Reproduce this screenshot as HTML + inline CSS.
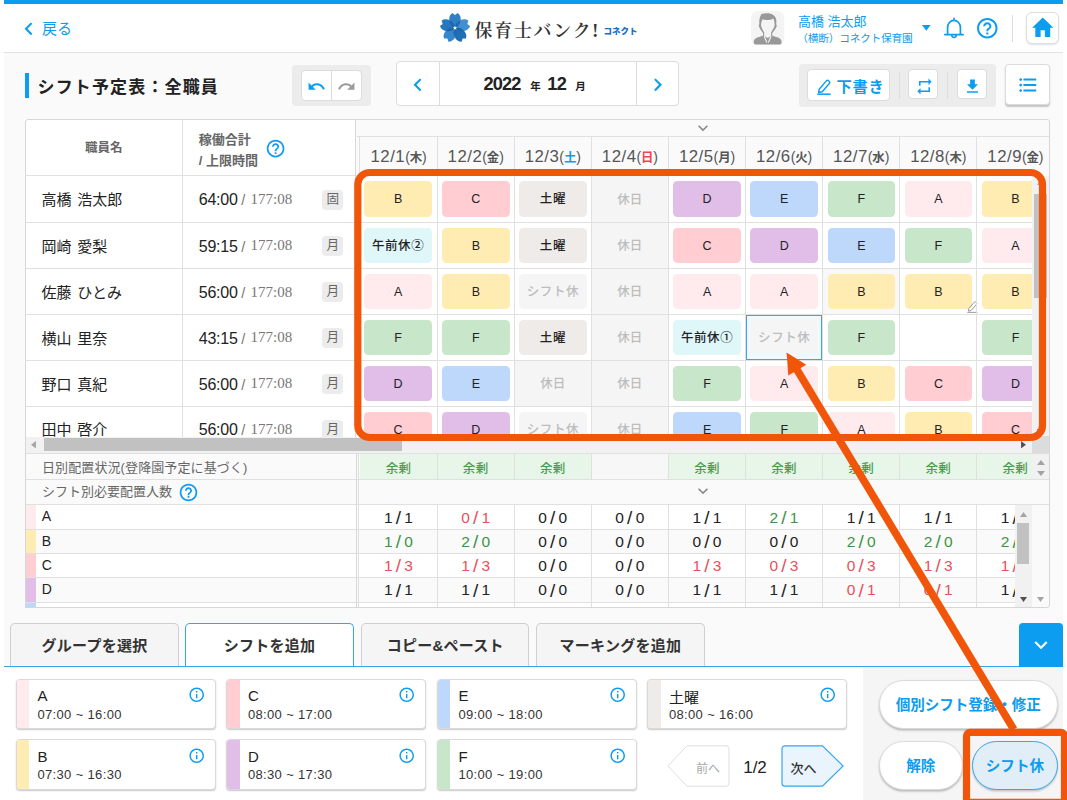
<!DOCTYPE html>
<html lang="ja"><head><meta charset="utf-8"><title>シフト予定表</title>
<style>
html,body{margin:0;padding:0;}
body{width:1067px;height:800px;overflow:hidden;position:relative;background:#fff;
font-family:"Liberation Sans","Noto Sans CJK JP",sans-serif;color:#222;}
body div,body svg{position:absolute;}
body div{box-sizing:border-box;}
span{position:static;}
</style></head><body>
<div style="left:4.00px;top:0.00px;width:1059.00px;height:800.00px;background:#fafafa;"></div>
<div style="left:4.00px;top:0.00px;width:1059.00px;height:3.90px;background:#0c9cf0;"></div>
<div style="left:4.00px;top:3.90px;width:1059.00px;height:48.90px;background:#fff;border-bottom:1px solid #e2e2e2;"></div>
<svg style="left:15.85px;top:15.65px;" width="25.50" height="25.50" viewBox="0 0 24 24"><path fill="#0c9cf0" d="M15.41 7.41L14 6l-6 6 6 6 1.41-1.41L10.83 12z"/></svg>
<div style="left:42.00px;top:17.80px;width:60.00px;height:21.00px;line-height:21.00px;color:#0c9cf0;font-size:15px;">戻る</div>
<svg style="left:438.00px;top:11.00px;" width="34.00" height="34.00" viewBox="0 0 100 100"><g transform="rotate(0 50 50)"><path fill="#2f7fc4" d="M50 50 C30 38 28 16 42 6 L50 12 L58 6 C72 16 70 38 50 50z"/></g><g transform="rotate(72 50 50)"><path fill="#3f8fd2" d="M50 50 C30 38 28 16 42 6 L50 12 L58 6 C72 16 70 38 50 50z"/></g><g transform="rotate(144 50 50)"><path fill="#1f6fb4" d="M50 50 C30 38 28 16 42 6 L50 12 L58 6 C72 16 70 38 50 50z"/></g><g transform="rotate(216 50 50)"><path fill="#3787cc" d="M50 50 C30 38 28 16 42 6 L50 12 L58 6 C72 16 70 38 50 50z"/></g><g transform="rotate(288 50 50)"><path fill="#2777bc" d="M50 50 C30 38 28 16 42 6 L50 12 L58 6 C72 16 70 38 50 50z"/></g><g transform="rotate(36 50 50)"><path fill="#1d62ad" opacity="0.85" d="M50 50 C44 42 44 30 50 24 C56 30 56 42 50 50z"/></g><g transform="rotate(108 50 50)"><path fill="#1d62ad" opacity="0.85" d="M50 50 C44 42 44 30 50 24 C56 30 56 42 50 50z"/></g><g transform="rotate(180 50 50)"><path fill="#1d62ad" opacity="0.85" d="M50 50 C44 42 44 30 50 24 C56 30 56 42 50 50z"/></g><g transform="rotate(252 50 50)"><path fill="#1d62ad" opacity="0.85" d="M50 50 C44 42 44 30 50 24 C56 30 56 42 50 50z"/></g><g transform="rotate(324 50 50)"><path fill="#1d62ad" opacity="0.85" d="M50 50 C44 42 44 30 50 24 C56 30 56 42 50 50z"/></g><path fill="#fff" d="M50 43.5l1.9 4 4.3.5-3.2 3 .9 4.3-3.9-2.2-3.9 2.2.9-4.3-3.2-3 4.3-.5z"/></svg>
<div style="left:474.50px;top:17.40px;width:130.00px;height:28.00px;line-height:28.00px;font-family:'Liberation Serif','Noto Serif CJK SC',serif;font-size:18px;font-weight:600;letter-spacing:1.7px;color:#333;white-space:nowrap;">保育士バンク!</div>
<div style="left:603.50px;top:24.40px;width:40.00px;height:14.00px;line-height:14.00px;font-size:8.5px;font-weight:900;color:#1b6fc2;white-space:nowrap;">コネクト</div>
<svg style="left:751.40px;top:11.20px;" width="33.30" height="34.20" viewBox="0 0 33.3 34.2"><rect x="0" y="0" width="33.3" height="34.2" rx="7" fill="#f4f4f4"/><path fill="#999" d="M8.1 15.8C7.6 14.6 7.7 13.6 8.4 13.2C8 9.5 8.5 5.5 10.6 2.9C13.5 2.2 17 2.1 19.6 2.7C22.5 3.3 24.7 5.6 25.2 8.2C25.5 10 25.4 11.8 25.1 13.2C25.9 13.6 25.9 14.8 25.4 15.9C24.6 18 22.6 20.4 21.2 22.2V24.6C23.5 25.6 27 26.3 28.8 27.6C30.3 28.8 30.9 30.6 30.4 32.2C30.1 33.1 29.4 33.6 28.4 33.6H4.9C3.9 33.6 3.2 33.1 2.9 32.2C2.4 30.6 3 28.8 4.5 27.6C6.3 26.3 9.8 25.6 12.1 24.6V22.2C10.7 20.4 8.9 18 8.1 15.8Z"/><path fill="#f4f4f4" d="M10 14.6C10 12.4 10.6 10.2 11.6 8.2C14 9.2 19.4 9.3 22.4 7.4C23.4 9.6 23.7 12.4 23.6 14.8C22.8 17.2 21.2 19.6 20.1 21.4V24.9L16.7 26.9L13.2 24.9V21.4C12 19.6 10.6 17.2 10 14.600000000000001Z"/><path fill="none" stroke="#f4f4f4" stroke-width="1.1" d="M13.2 25.2L15.9 31.6M20.1 25.2L17.4 31.6"/></svg>
<div style="left:798.00px;top:12.50px;width:120.00px;height:18.00px;line-height:18.00px;color:#0c9cf0;font-size:13px;white-space:nowrap;">高橋 浩太郎</div>
<div style="left:797.20px;top:30.00px;width:130.00px;height:16.00px;line-height:16.00px;color:#0c9cf0;font-size:10.7px;white-space:nowrap;letter-spacing:-0.2px;">（横断）コネクト保育園</div>
<svg style="left:922.30px;top:24.90px;" width="8.60" height="5.80" viewBox="0 0 8.6 5.8"><path fill="#0c9cf0" d="M0 0h8.6L4.3 5.8z"/></svg>
<svg style="left:941.60px;top:15.60px;" width="24.00" height="24.00" viewBox="0 0 24 24"><path fill="none" stroke="#0c9cf0" stroke-width="1.7" stroke-linejoin="round" stroke-linecap="round" d="M12 3.3v-1M5.6 18.5V11.5C5.6 7.6 8.300000000000001 4.4 12 4.4s6.4 3.2 6.4 7.1v7M2.8 18.6h18.4M9.700000000000001 19.2c.2 1.5 1.1 2.3 2.3 2.3s2.1-.8 2.3-2.3"/></svg>
<svg style="left:974.90px;top:16.30px;" width="24.60" height="24.60" viewBox="0 0 24 24"><path fill="#0c9cf0" d="M11 18h2v-2h-2v2zm1-16C6.48 2 2 6.48 2 12s4.48 10 10 10 10-4.48 10-10S17.52 2 12 2zm0 18c-4.41 0-8-3.59-8-8s3.59-8 8-8 8 3.59 8 8-3.59 8-8 8zm0-14c-2.21 0-4 1.79-4 4h2c0-1.1.9-2 2-2s2 .9 2 2c0 2-3 1.75-3 5h2c0-2.25 3-2.5 3-5 0-2.21-1.79-4-4-4z"/></svg>
<div style="left:1012.00px;top:15.00px;width:1.00px;height:26.50px;background:#ddd;"></div>
<div style="left:1026.00px;top:11.70px;width:33.00px;height:32.40px;background:#fff;border:1px solid #dedede;border-radius:6px;box-shadow:0 1px 2px rgba(0,0,0,.12);"></div>
<svg style="left:1029.65px;top:14.2px;" width="25.5" height="27.7" viewBox="0 0 24 24" preserveAspectRatio="none"><path fill="#0c9cf0" d="M10 20v-6h4v6h5v-8h3L12 3 2 12h3v8z"/></svg>
<div style="left:25.00px;top:73.00px;width:4.20px;height:24.50px;background:#0c9cf0;"></div>
<div style="left:37.50px;top:75.00px;width:200.00px;height:26.00px;line-height:26.00px;font-size:17px;font-weight:700;color:#222;letter-spacing:1.15px;white-space:nowrap;">シフト予定表：全職員</div>
<div style="left:292.20px;top:64.50px;width:78.80px;height:41.70px;background:#ececec;border-radius:4px;"></div>
<div style="left:301.00px;top:70.10px;width:61.40px;height:30.50px;background:#fff;border:1px solid #dcdcdc;border-radius:4px;"></div>
<div style="left:331.00px;top:70.30px;width:1.00px;height:30.00px;background:#dcdcdc;"></div>
<svg style="left:306.70px;top:76.50px;" width="19.00" height="19.00" viewBox="0 0 24 24"><path fill="#0c9cf0" d="M12.5 8c-2.65 0-5.05.99-6.9 2.6L2 7v9h9l-3.62-3.62c1.39-1.16 3.16-1.88 5.12-1.88 3.54 0 6.55 2.31 7.6 5.5l2.37-.78C21.08 11.03 17.15 8 12.5 8z"/></svg>
<svg style="left:337.30px;top:76.50px;" width="19.00" height="19.00" viewBox="0 0 24 24"><path fill="#9a9a9a" d="M18.4 10.6C16.55 8.99 14.15 8 11.5 8c-4.65 0-8.58 3.03-9.96 7.22L3.9 16c1.05-3.19 4.05-5.5 7.6-5.5 1.95 0 3.73.72 5.12 1.88L13 16h9V7l-3.6 3.6z"/></svg>
<div style="left:396.00px;top:61.30px;width:283.00px;height:44.60px;background:#fff;border:1px solid #dcdcdc;border-radius:4px;"></div>
<div style="left:439.00px;top:61.60px;width:1.00px;height:44.20px;background:#dcdcdc;"></div>
<div style="left:636.00px;top:61.60px;width:1.00px;height:44.20px;background:#dcdcdc;"></div>
<svg style="left:405.25px;top:71.55px;" width="25.50" height="25.50" viewBox="0 0 24 24"><path fill="#0c9cf0" d="M15.41 7.41L14 6l-6 6 6 6 1.41-1.41L10.83 12z"/></svg>
<svg style="left:645.25px;top:71.55px;" width="25.50" height="25.50" viewBox="0 0 24 24"><path fill="#0c9cf0" d="M10 6L8.59 7.41 13.17 12l-4.58 4.59L10 18l6-6z"/></svg>
<div style="left:483.6px;top:70px;width:150px;height:28px;line-height:28px;text-align:left;font-weight:700;color:#222;white-space:nowrap;"><span style="font-size:18.2px;letter-spacing:-0.9px;">2022</span><span style="font-size:10.5px;margin:0 6.3px 0 9.9px;">年</span><span style="font-size:18.2px;letter-spacing:-0.45px;">12</span><span style="font-size:10.5px;margin-left:8.8px;">月</span></div>
<div style="left:798.70px;top:64.00px;width:197.30px;height:42.80px;background:#ececec;border-radius:4px;"></div>
<div style="left:807.40px;top:69.30px;width:82.20px;height:32.20px;background:#fff;border:1px solid #dcdcdc;border-radius:4px;"></div>
<svg style="left:815.50px;top:78.20px;" width="16.00" height="17.00" viewBox="0 0 16 17"><path fill="none" stroke="#0c9cf0" stroke-width="1.4" stroke-linejoin="round" d="M3.2 11.2L10.6 2.6c.5-.5 1.200000000000001-.5 1.7 0l1.1 1c.5.5.5 1.2.1 1.7L6.2 13.8l-3.600000000000001.7z"/><path fill="none" stroke="#0c9cf0" stroke-width="1.5" d="M1.2 16.2h13.4"/></svg>
<div style="left:836.60px;top:75.50px;width:50.00px;height:22.00px;line-height:22.00px;font-size:15.3px;font-weight:700;color:#0c9cf0;letter-spacing:0.7px;white-space:nowrap;">下書き</div>
<div style="left:898.50px;top:72.00px;width:1.00px;height:27.00px;background:#dcdcdc;"></div>
<div style="left:908.40px;top:69.30px;width:30.00px;height:30.20px;background:#fff;border:1px solid #dcdcdc;border-radius:4px;"></div>
<svg style="left:914.50px;top:77.20px;" width="19.00" height="19.00" viewBox="0 0 24 24"><path fill="#0c9cf0" d="M7 7h10v3l4-4-4-4v3H5v6h2V7zm10 10H7v-3l-4 4 4 4v-3h12v-6h-2v4z"/></svg>
<div style="left:947.30px;top:72.00px;width:1.00px;height:27.00px;background:#dcdcdc;"></div>
<div style="left:957.30px;top:69.30px;width:30.00px;height:30.20px;background:#fff;border:1px solid #dcdcdc;border-radius:4px;"></div>
<svg style="left:963.20px;top:77.00px;" width="19.00" height="19.00" viewBox="0 0 24 24"><path fill="#0c9cf0" d="M19 9h-4V3H9v6H5l7 7 7-7zM5 18v2h14v-2H5z"/></svg>
<div style="left:1005.00px;top:63.70px;width:44.80px;height:41.50px;background:#fff;border:1px solid #dcdcdc;border-radius:4px;box-shadow:0 1.5px 1.5px rgba(0,0,0,.22);"></div>
<svg style="left:1016.80px;top:73.70px;" width="22.00" height="22.00" viewBox="0 0 24 24"><path fill="#0c9cf0" d="M4 10.5c-.83 0-1.5.67-1.5 1.5s.67 1.5 1.5 1.5 1.5-.67 1.5-1.5-.67-1.5-1.5-1.5zm0-6c-.83 0-1.5.67-1.5 1.5S3.17 7.5 4 7.5 5.5 6.83 5.5 6 4.83 4.5 4 4.5zm0 12c-.83 0-1.5.68-1.5 1.5s.68 1.5 1.5 1.5 1.5-.68 1.5-1.5-.67-1.5-1.5-1.5zM7 19h14v-2H7v2zm0-6h14v-2H7v2zm0-8v2h14V5H7z"/></svg>
<div style="left:25.20px;top:119.00px;width:1024.60px;height:317.80px;background:#fff;"></div>
<div style="left:356.20px;top:119.00px;width:693.60px;height:56.50px;background:#fafafa;"></div>
<div style="left:591.30px;top:175.50px;width:77.10px;height:261.30px;background:#f5f5f5;"></div>
<div style="left:514.20px;top:360.20px;width:77.10px;height:45.90px;background:#f5f5f5;"></div>
<div style="left:822.60px;top:268.40px;width:77.10px;height:45.90px;background:#f8f8f8;"></div>
<div style="left:25.20px;top:137.50px;width:157.00px;height:20.00px;line-height:20.00px;text-align:center;font-size:12.5px;font-weight:700;color:#666;">職員名</div>
<div style="left:198.80px;top:129.30px;width:80.00px;height:21.00px;line-height:21.00px;font-size:13px;font-weight:700;color:#666;white-space:nowrap;">稼働合計</div>
<div style="left:198.80px;top:150.30px;width:80.00px;height:21.00px;line-height:21.00px;font-size:13px;font-weight:700;color:#666;white-space:nowrap;">/ 上限時間</div>
<svg style="left:264.90px;top:137.70px;" width="21.20" height="21.20" viewBox="0 0 24 24"><path fill="#0c9cf0" d="M11 18h2v-2h-2v2zm1-16C6.48 2 2 6.48 2 12s4.48 10 10 10 10-4.48 10-10S17.52 2 12 2zm0 18c-4.41 0-8-3.59-8-8s3.59-8 8-8 8 3.59 8 8-3.59 8-8 8zm0-14c-2.21 0-4 1.79-4 4h2c0-1.1.9-2 2-2s2 .9 2 2c0 2-3 1.75-3 5h2c0-2.25 3-2.5 3-5 0-2.21-1.79-4-4-4z"/></svg>
<div style="left:360.00px;top:145.2px;width:77.1px;height:24px;line-height:24px;text-align:center;color:#555;white-space:nowrap;letter-spacing:-0.1px;"><span style="font-size:16.8px;letter-spacing:0.5px;">12/1</span><span style="font-size:14px;">(</span><span style="font-size:12.4px;font-weight:700;color:#555;position:relative;top:-0.6px;">木</span><span style="font-size:14px;">)</span></div>
<div style="left:437.10px;top:145.2px;width:77.1px;height:24px;line-height:24px;text-align:center;color:#555;white-space:nowrap;letter-spacing:-0.1px;"><span style="font-size:16.8px;letter-spacing:0.5px;">12/2</span><span style="font-size:14px;">(</span><span style="font-size:12.4px;font-weight:700;color:#555;position:relative;top:-0.6px;">金</span><span style="font-size:14px;">)</span></div>
<div style="left:514.20px;top:145.2px;width:77.1px;height:24px;line-height:24px;text-align:center;color:#555;white-space:nowrap;letter-spacing:-0.1px;"><span style="font-size:16.8px;letter-spacing:0.5px;">12/3</span><span style="font-size:14px;">(</span><span style="font-size:12.4px;font-weight:700;color:#0c9cf0;position:relative;top:-0.6px;">土</span><span style="font-size:14px;">)</span></div>
<div style="left:591.30px;top:145.2px;width:77.1px;height:24px;line-height:24px;text-align:center;color:#555;white-space:nowrap;letter-spacing:-0.1px;"><span style="font-size:16.8px;letter-spacing:0.5px;">12/4</span><span style="font-size:14px;">(</span><span style="font-size:12.4px;font-weight:700;color:#f0454f;position:relative;top:-0.6px;">日</span><span style="font-size:14px;">)</span></div>
<div style="left:668.40px;top:145.2px;width:77.1px;height:24px;line-height:24px;text-align:center;color:#555;white-space:nowrap;letter-spacing:-0.1px;"><span style="font-size:16.8px;letter-spacing:0.5px;">12/5</span><span style="font-size:14px;">(</span><span style="font-size:12.4px;font-weight:700;color:#555;position:relative;top:-0.6px;">月</span><span style="font-size:14px;">)</span></div>
<div style="left:745.50px;top:145.2px;width:77.1px;height:24px;line-height:24px;text-align:center;color:#555;white-space:nowrap;letter-spacing:-0.1px;"><span style="font-size:16.8px;letter-spacing:0.5px;">12/6</span><span style="font-size:14px;">(</span><span style="font-size:12.4px;font-weight:700;color:#555;position:relative;top:-0.6px;">火</span><span style="font-size:14px;">)</span></div>
<div style="left:822.60px;top:145.2px;width:77.1px;height:24px;line-height:24px;text-align:center;color:#555;white-space:nowrap;letter-spacing:-0.1px;"><span style="font-size:16.8px;letter-spacing:0.5px;">12/7</span><span style="font-size:14px;">(</span><span style="font-size:12.4px;font-weight:700;color:#555;position:relative;top:-0.6px;">水</span><span style="font-size:14px;">)</span></div>
<div style="left:899.70px;top:145.2px;width:77.1px;height:24px;line-height:24px;text-align:center;color:#555;white-space:nowrap;letter-spacing:-0.1px;"><span style="font-size:16.8px;letter-spacing:0.5px;">12/8</span><span style="font-size:14px;">(</span><span style="font-size:12.4px;font-weight:700;color:#555;position:relative;top:-0.6px;">木</span><span style="font-size:14px;">)</span></div>
<div style="left:976.80px;top:145.2px;width:77.1px;height:24px;line-height:24px;text-align:center;color:#555;white-space:nowrap;letter-spacing:-0.1px;"><span style="font-size:16.8px;letter-spacing:0.5px;">12/9</span><span style="font-size:14px;">(</span><span style="font-size:12.4px;font-weight:700;color:#555;position:relative;top:-0.6px;">金</span><span style="font-size:14px;">)</span></div>
<svg style="left:692.50px;top:117.60px;" width="20.00" height="20.00" viewBox="0 0 24 24"><path fill="#888" d="M16.59 8.59L12 13.17 7.41 8.59 6 10l6 6 6-6z"/></svg>
<div style="left:25.2px;top:175.5px;width:1006.8px;height:261.3px;overflow:hidden;">
<div style="left:16.40px;top:12.70px;width:130.00px;height:24.00px;line-height:24px;font-size:15px;color:#222;white-space:nowrap;word-spacing:1.6px;">高橋 浩太郎</div>
<div style="left:173.60px;top:12.70px;width:130px;height:24px;line-height:24px;white-space:nowrap;color:#222;"><span style="font-size:16px;letter-spacing:-0.25px;">64:00</span><span style="font-size:14.5px;color:#777;margin-left:3.6px;">/</span><span style="font-family:'Liberation Serif',serif;font-size:15px;color:#777;margin-left:5.4px;position:relative;top:-1.2px;">177:08</span></div>
<div style="left:297.00px;top:14.30px;width:21.20px;height:19.80px;line-height:19.8px;background:#ececec;border-radius:4px;text-align:center;font-size:12.6px;color:#666;">固</div>
<div style="left:338.60px;top:5.90px;width:68.60px;height:35.20px;line-height:37.8px;background:#ffecb3;border-radius:4.5px;text-align:center;font-size:12.5px;font-weight:500;color:#222;white-space:nowrap;">B</div>
<div style="left:416.90px;top:5.90px;width:67.50px;height:35.20px;line-height:37.8px;background:#ffcdd2;border-radius:4.5px;text-align:center;font-size:12.5px;font-weight:500;color:#222;white-space:nowrap;">C</div>
<div style="left:494.00px;top:5.90px;width:67.50px;height:35.20px;line-height:37.8px;background:#efebe9;border-radius:4.5px;text-align:center;font-size:12.5px;font-weight:500;color:#222;white-space:nowrap;letter-spacing:0.6px;">土曜</div>
<div style="left:566.10px;top:0.00px;width:77.10px;height:46.90px;line-height:48.3px;text-align:center;font-size:12.5px;color:#bdbdbd;font-weight:500;">休日</div>
<div style="left:648.20px;top:5.90px;width:67.50px;height:35.20px;line-height:37.8px;background:#e1bee7;border-radius:4.5px;text-align:center;font-size:12.5px;font-weight:500;color:#222;white-space:nowrap;">D</div>
<div style="left:725.30px;top:5.90px;width:67.50px;height:35.20px;line-height:37.8px;background:#bdd8fb;border-radius:4.5px;text-align:center;font-size:12.5px;font-weight:500;color:#222;white-space:nowrap;">E</div>
<div style="left:802.40px;top:5.90px;width:67.50px;height:35.20px;line-height:37.8px;background:#c8e6c9;border-radius:4.5px;text-align:center;font-size:12.5px;font-weight:500;color:#222;white-space:nowrap;">F</div>
<div style="left:879.50px;top:5.90px;width:67.50px;height:35.20px;line-height:37.8px;background:#ffebee;border-radius:4.5px;text-align:center;font-size:12.5px;font-weight:500;color:#222;white-space:nowrap;">A</div>
<div style="left:956.60px;top:5.90px;width:67.50px;height:35.20px;line-height:37.8px;background:#ffecb3;border-radius:4.5px;text-align:center;font-size:12.5px;font-weight:500;color:#222;white-space:nowrap;">B</div>
<div style="left:16.40px;top:59.15px;width:130.00px;height:24.00px;line-height:24px;font-size:15px;color:#222;white-space:nowrap;word-spacing:1.6px;">岡崎 愛梨</div>
<div style="left:173.60px;top:59.15px;width:130px;height:24px;line-height:24px;white-space:nowrap;color:#222;"><span style="font-size:16px;letter-spacing:-0.25px;">59:15</span><span style="font-size:14.5px;color:#777;margin-left:3.6px;">/</span><span style="font-family:'Liberation Serif',serif;font-size:15px;color:#777;margin-left:5.4px;position:relative;top:-1.2px;">177:08</span></div>
<div style="left:297.00px;top:60.75px;width:21.20px;height:19.80px;line-height:19.8px;background:#ececec;border-radius:4px;text-align:center;font-size:12.6px;color:#666;">月</div>
<div style="left:338.60px;top:52.50px;width:68.60px;height:35.20px;line-height:37.8px;background:#e0f7fa;border-radius:4.5px;text-align:center;font-size:12.5px;font-weight:500;color:#222;white-space:nowrap;letter-spacing:0.6px;">午前休②</div>
<div style="left:416.90px;top:52.50px;width:67.50px;height:35.20px;line-height:37.8px;background:#ffecb3;border-radius:4.5px;text-align:center;font-size:12.5px;font-weight:500;color:#222;white-space:nowrap;">B</div>
<div style="left:494.00px;top:52.50px;width:67.50px;height:35.20px;line-height:37.8px;background:#efebe9;border-radius:4.5px;text-align:center;font-size:12.5px;font-weight:500;color:#222;white-space:nowrap;letter-spacing:0.6px;">土曜</div>
<div style="left:566.10px;top:46.60px;width:77.10px;height:46.90px;line-height:48.3px;text-align:center;font-size:12.5px;color:#bdbdbd;font-weight:500;">休日</div>
<div style="left:648.20px;top:52.50px;width:67.50px;height:35.20px;line-height:37.8px;background:#ffcdd2;border-radius:4.5px;text-align:center;font-size:12.5px;font-weight:500;color:#222;white-space:nowrap;">C</div>
<div style="left:725.30px;top:52.50px;width:67.50px;height:35.20px;line-height:37.8px;background:#e1bee7;border-radius:4.5px;text-align:center;font-size:12.5px;font-weight:500;color:#222;white-space:nowrap;">D</div>
<div style="left:802.40px;top:52.50px;width:67.50px;height:35.20px;line-height:37.8px;background:#bdd8fb;border-radius:4.5px;text-align:center;font-size:12.5px;font-weight:500;color:#222;white-space:nowrap;">E</div>
<div style="left:879.50px;top:52.50px;width:67.50px;height:35.20px;line-height:37.8px;background:#c8e6c9;border-radius:4.5px;text-align:center;font-size:12.5px;font-weight:500;color:#222;white-space:nowrap;">F</div>
<div style="left:956.60px;top:52.50px;width:67.50px;height:35.20px;line-height:37.8px;background:#ffebee;border-radius:4.5px;text-align:center;font-size:12.5px;font-weight:500;color:#222;white-space:nowrap;">A</div>
<div style="left:16.40px;top:105.25px;width:130.00px;height:24.00px;line-height:24px;font-size:15px;color:#222;white-space:nowrap;word-spacing:1.6px;">佐藤 ひとみ</div>
<div style="left:173.60px;top:105.25px;width:130px;height:24px;line-height:24px;white-space:nowrap;color:#222;"><span style="font-size:16px;letter-spacing:-0.25px;">56:00</span><span style="font-size:14.5px;color:#777;margin-left:3.6px;">/</span><span style="font-family:'Liberation Serif',serif;font-size:15px;color:#777;margin-left:5.4px;position:relative;top:-1.2px;">177:08</span></div>
<div style="left:297.00px;top:106.85px;width:21.20px;height:19.80px;line-height:19.8px;background:#ececec;border-radius:4px;text-align:center;font-size:12.6px;color:#666;">月</div>
<div style="left:338.60px;top:98.80px;width:68.60px;height:35.20px;line-height:37.8px;background:#ffebee;border-radius:4.5px;text-align:center;font-size:12.5px;font-weight:500;color:#222;white-space:nowrap;">A</div>
<div style="left:416.90px;top:98.80px;width:67.50px;height:35.20px;line-height:37.8px;background:#ffecb3;border-radius:4.5px;text-align:center;font-size:12.5px;font-weight:500;color:#222;white-space:nowrap;">B</div>
<div style="left:494.00px;top:98.80px;width:67.50px;height:35.20px;line-height:37.8px;background:#f5f5f5;border-radius:4.5px;text-align:center;font-size:12.5px;font-weight:500;color:#bdbdbd;white-space:nowrap;letter-spacing:0.6px;">シフト休</div>
<div style="left:566.10px;top:92.90px;width:77.10px;height:46.90px;line-height:48.3px;text-align:center;font-size:12.5px;color:#bdbdbd;font-weight:500;">休日</div>
<div style="left:648.20px;top:98.80px;width:67.50px;height:35.20px;line-height:37.8px;background:#ffebee;border-radius:4.5px;text-align:center;font-size:12.5px;font-weight:500;color:#222;white-space:nowrap;">A</div>
<div style="left:725.30px;top:98.80px;width:67.50px;height:35.20px;line-height:37.8px;background:#ffebee;border-radius:4.5px;text-align:center;font-size:12.5px;font-weight:500;color:#222;white-space:nowrap;">A</div>
<div style="left:802.40px;top:98.80px;width:67.50px;height:35.20px;line-height:37.8px;background:#ffecb3;border-radius:4.5px;text-align:center;font-size:12.5px;font-weight:500;color:#222;white-space:nowrap;">B</div>
<div style="left:879.50px;top:98.80px;width:67.50px;height:35.20px;line-height:37.8px;background:#ffecb3;border-radius:4.5px;text-align:center;font-size:12.5px;font-weight:500;color:#222;white-space:nowrap;">B</div>
<div style="left:956.60px;top:98.80px;width:67.50px;height:35.20px;line-height:37.8px;background:#ffecb3;border-radius:4.5px;text-align:center;font-size:12.5px;font-weight:500;color:#222;white-space:nowrap;">B</div>
<div style="left:16.40px;top:151.15px;width:130.00px;height:24.00px;line-height:24px;font-size:15px;color:#222;white-space:nowrap;word-spacing:1.6px;">横山 里奈</div>
<div style="left:173.60px;top:151.15px;width:130px;height:24px;line-height:24px;white-space:nowrap;color:#222;"><span style="font-size:16px;letter-spacing:-0.25px;">43:15</span><span style="font-size:14.5px;color:#777;margin-left:3.6px;">/</span><span style="font-family:'Liberation Serif',serif;font-size:15px;color:#777;margin-left:5.4px;position:relative;top:-1.2px;">177:08</span></div>
<div style="left:297.00px;top:152.75px;width:21.20px;height:19.80px;line-height:19.8px;background:#ececec;border-radius:4px;text-align:center;font-size:12.6px;color:#666;">月</div>
<div style="left:338.60px;top:144.70px;width:68.60px;height:35.20px;line-height:37.8px;background:#c8e6c9;border-radius:4.5px;text-align:center;font-size:12.5px;font-weight:500;color:#222;white-space:nowrap;">F</div>
<div style="left:416.90px;top:144.70px;width:67.50px;height:35.20px;line-height:37.8px;background:#c8e6c9;border-radius:4.5px;text-align:center;font-size:12.5px;font-weight:500;color:#222;white-space:nowrap;">F</div>
<div style="left:494.00px;top:144.70px;width:67.50px;height:35.20px;line-height:37.8px;background:#efebe9;border-radius:4.5px;text-align:center;font-size:12.5px;font-weight:500;color:#222;white-space:nowrap;letter-spacing:0.6px;">土曜</div>
<div style="left:566.10px;top:138.80px;width:77.10px;height:46.90px;line-height:48.3px;text-align:center;font-size:12.5px;color:#bdbdbd;font-weight:500;">休日</div>
<div style="left:648.20px;top:144.70px;width:67.50px;height:35.20px;line-height:37.8px;background:#e0f7fa;border-radius:4.5px;text-align:center;font-size:12.5px;font-weight:500;color:#222;white-space:nowrap;letter-spacing:0.6px;">午前休①</div>
<div style="left:720.60px;top:139.20px;width:76.50px;height:45.30px;box-sizing:border-box;border:1.4px solid #35a6ee;background:#f1f8fe;"></div>
<div style="left:725.30px;top:144.70px;width:67.50px;height:35.20px;line-height:37.8px;background:#f5f5f5;border-radius:4.5px;text-align:center;font-size:12.5px;font-weight:500;color:#bdbdbd;white-space:nowrap;letter-spacing:0.6px;">シフト休</div>
<div style="left:802.40px;top:144.70px;width:67.50px;height:35.20px;line-height:37.8px;background:#c8e6c9;border-radius:4.5px;text-align:center;font-size:12.5px;font-weight:500;color:#222;white-space:nowrap;">F</div>
<div style="left:956.60px;top:144.70px;width:67.50px;height:35.20px;line-height:37.8px;background:#c8e6c9;border-radius:4.5px;text-align:center;font-size:12.5px;font-weight:500;color:#222;white-space:nowrap;">F</div>
<div style="left:16.40px;top:197.05px;width:130.00px;height:24.00px;line-height:24px;font-size:15px;color:#222;white-space:nowrap;word-spacing:1.6px;">野口 真紀</div>
<div style="left:173.60px;top:197.05px;width:130px;height:24px;line-height:24px;white-space:nowrap;color:#222;"><span style="font-size:16px;letter-spacing:-0.25px;">56:00</span><span style="font-size:14.5px;color:#777;margin-left:3.6px;">/</span><span style="font-family:'Liberation Serif',serif;font-size:15px;color:#777;margin-left:5.4px;position:relative;top:-1.2px;">177:08</span></div>
<div style="left:297.00px;top:198.65px;width:21.20px;height:19.80px;line-height:19.8px;background:#ececec;border-radius:4px;text-align:center;font-size:12.6px;color:#666;">月</div>
<div style="left:338.60px;top:190.60px;width:68.60px;height:35.20px;line-height:37.8px;background:#e1bee7;border-radius:4.5px;text-align:center;font-size:12.5px;font-weight:500;color:#222;white-space:nowrap;">D</div>
<div style="left:416.90px;top:190.60px;width:67.50px;height:35.20px;line-height:37.8px;background:#bdd8fb;border-radius:4.5px;text-align:center;font-size:12.5px;font-weight:500;color:#222;white-space:nowrap;">E</div>
<div style="left:489.00px;top:184.70px;width:77.10px;height:46.90px;line-height:48.3px;text-align:center;font-size:12.5px;color:#bdbdbd;font-weight:500;">休日</div>
<div style="left:566.10px;top:184.70px;width:77.10px;height:46.90px;line-height:48.3px;text-align:center;font-size:12.5px;color:#bdbdbd;font-weight:500;">休日</div>
<div style="left:648.20px;top:190.60px;width:67.50px;height:35.20px;line-height:37.8px;background:#c8e6c9;border-radius:4.5px;text-align:center;font-size:12.5px;font-weight:500;color:#222;white-space:nowrap;">F</div>
<div style="left:725.30px;top:190.60px;width:67.50px;height:35.20px;line-height:37.8px;background:#ffebee;border-radius:4.5px;text-align:center;font-size:12.5px;font-weight:500;color:#222;white-space:nowrap;">A</div>
<div style="left:802.40px;top:190.60px;width:67.50px;height:35.20px;line-height:37.8px;background:#ffecb3;border-radius:4.5px;text-align:center;font-size:12.5px;font-weight:500;color:#222;white-space:nowrap;">B</div>
<div style="left:879.50px;top:190.60px;width:67.50px;height:35.20px;line-height:37.8px;background:#ffcdd2;border-radius:4.5px;text-align:center;font-size:12.5px;font-weight:500;color:#222;white-space:nowrap;">C</div>
<div style="left:956.60px;top:190.60px;width:67.50px;height:35.20px;line-height:37.8px;background:#e1bee7;border-radius:4.5px;text-align:center;font-size:12.5px;font-weight:500;color:#222;white-space:nowrap;">D</div>
<div style="left:16.40px;top:242.95px;width:130.00px;height:24.00px;line-height:24px;font-size:15px;color:#222;white-space:nowrap;word-spacing:1.6px;">田中 啓介</div>
<div style="left:173.60px;top:242.95px;width:130px;height:24px;line-height:24px;white-space:nowrap;color:#222;"><span style="font-size:16px;letter-spacing:-0.25px;">56:00</span><span style="font-size:14.5px;color:#777;margin-left:3.6px;">/</span><span style="font-family:'Liberation Serif',serif;font-size:15px;color:#777;margin-left:5.4px;position:relative;top:-1.2px;">177:08</span></div>
<div style="left:297.00px;top:244.55px;width:21.20px;height:19.80px;line-height:19.8px;background:#ececec;border-radius:4px;text-align:center;font-size:12.6px;color:#666;">月</div>
<div style="left:338.60px;top:236.50px;width:68.60px;height:35.20px;line-height:37.8px;background:#ffcdd2;border-radius:4.5px;text-align:center;font-size:12.5px;font-weight:500;color:#222;white-space:nowrap;">C</div>
<div style="left:416.90px;top:236.50px;width:67.50px;height:35.20px;line-height:37.8px;background:#e1bee7;border-radius:4.5px;text-align:center;font-size:12.5px;font-weight:500;color:#222;white-space:nowrap;">D</div>
<div style="left:494.00px;top:236.50px;width:67.50px;height:35.20px;line-height:37.8px;background:#f5f5f5;border-radius:4.5px;text-align:center;font-size:12.5px;font-weight:500;color:#bdbdbd;white-space:nowrap;letter-spacing:0.6px;">シフト休</div>
<div style="left:566.10px;top:230.60px;width:77.10px;height:46.90px;line-height:48.3px;text-align:center;font-size:12.5px;color:#bdbdbd;font-weight:500;">休日</div>
<div style="left:648.20px;top:236.50px;width:67.50px;height:35.20px;line-height:37.8px;background:#bdd8fb;border-radius:4.5px;text-align:center;font-size:12.5px;font-weight:500;color:#222;white-space:nowrap;">E</div>
<div style="left:725.30px;top:236.50px;width:67.50px;height:35.20px;line-height:37.8px;background:#c8e6c9;border-radius:4.5px;text-align:center;font-size:12.5px;font-weight:500;color:#222;white-space:nowrap;">F</div>
<div style="left:802.40px;top:236.50px;width:67.50px;height:35.20px;line-height:37.8px;background:#ffebee;border-radius:4.5px;text-align:center;font-size:12.5px;font-weight:500;color:#222;white-space:nowrap;">A</div>
<div style="left:879.50px;top:236.50px;width:67.50px;height:35.20px;line-height:37.8px;background:#ffecb3;border-radius:4.5px;text-align:center;font-size:12.5px;font-weight:500;color:#222;white-space:nowrap;">B</div>
<div style="left:956.60px;top:236.50px;width:67.50px;height:35.20px;line-height:37.8px;background:#ffcdd2;border-radius:4.5px;text-align:center;font-size:12.5px;font-weight:500;color:#222;white-space:nowrap;">C</div>
<svg style="left:940.80px;top:124.50px;" width="13" height="13" viewBox="0 0 16 17"><path fill="none" stroke="#9a9a9a" stroke-width="1.3" stroke-linejoin="round" d="M3.2 11.2L10.6 2.6c.5-.5 1.2-.5 1.7 0l1.1 1c.5.5.5 1.2.1 1.7L6.2 13.8l-3.6.7z"/><path fill="none" stroke="#9a9a9a" stroke-width="1.3" d="M1.2 16.2h13.4"/></svg>
</div>
<div style="left:25.20px;top:175.00px;width:1006.80px;height:1.00px;background:#e0e0e0;"></div>
<div style="left:25.20px;top:221.60px;width:1006.80px;height:1.00px;background:#e0e0e0;"></div>
<div style="left:25.20px;top:267.90px;width:1006.80px;height:1.00px;background:#e0e0e0;"></div>
<div style="left:25.20px;top:313.80px;width:1006.80px;height:1.00px;background:#e0e0e0;"></div>
<div style="left:25.20px;top:359.70px;width:1006.80px;height:1.00px;background:#e0e0e0;"></div>
<div style="left:25.20px;top:405.60px;width:1006.80px;height:1.00px;background:#e0e0e0;"></div>
<div style="left:356.50px;top:136.10px;width:693.30px;height:1.00px;background:#e0e0e0;"></div>
<div style="left:436.60px;top:136.60px;width:1.00px;height:300.20px;background:#e0e0e0;"></div>
<div style="left:513.70px;top:136.60px;width:1.00px;height:300.20px;background:#e0e0e0;"></div>
<div style="left:590.80px;top:136.60px;width:1.00px;height:300.20px;background:#e0e0e0;"></div>
<div style="left:667.90px;top:136.60px;width:1.00px;height:300.20px;background:#e0e0e0;"></div>
<div style="left:745.00px;top:136.60px;width:1.00px;height:300.20px;background:#e0e0e0;"></div>
<div style="left:822.10px;top:136.60px;width:1.00px;height:300.20px;background:#e0e0e0;"></div>
<div style="left:899.20px;top:136.60px;width:1.00px;height:300.20px;background:#e0e0e0;"></div>
<div style="left:976.30px;top:136.60px;width:1.00px;height:300.20px;background:#e0e0e0;"></div>
<div style="left:182.00px;top:119.00px;width:1.00px;height:317.80px;background:#e0e0e0;"></div>
<div style="left:355.20px;top:119.00px;width:1.00px;height:317.80px;background:#d8d8d8;"></div>
<div style="left:359.20px;top:136.60px;width:1.00px;height:300.20px;background:#e0e0e0;"></div>
<div style="left:1032.00px;top:175.50px;width:17.80px;height:261.30px;background:#f1f1f1;"></div>
<div style="left:1034.30px;top:194.10px;width:13.00px;height:104.00px;background:#c1c1c1;"></div>
<div style="left:25.20px;top:436.80px;width:1024.60px;height:16.00px;background:#f1f1f1;"></div>
<div style="left:44.00px;top:438.20px;width:358.00px;height:13.00px;background:#c1c1c1;"></div>
<div style="left:1032.00px;top:435.80px;width:17.80px;height:17.00px;background:#dcdcdc;"></div>
<svg style="left:31.00px;top:441.00px;" width="5.00" height="7.40" viewBox="0 0 6 9"><path fill="#a3a3a3" d="M6 0v9L0 4.5z"/></svg>
<svg style="left:1021.20px;top:441.00px;" width="5.00" height="7.40" viewBox="0 0 6 9"><path fill="#505050" d="M0 0v9L6 4.5z"/></svg>
<svg style="left:1037.00px;top:429.00px;" width="7.00" height="5.00" viewBox="0 0 7 5"><path fill="#505050" d="M0 0h7L3.5 5z"/></svg>
<svg style="left:1037.00px;top:180.00px;" width="7.00" height="5.00" viewBox="0 0 7 5"><path fill="#a3a3a3" d="M0 5h7L3.5 0z"/></svg>
<div style="left:25.20px;top:452.80px;width:1024.60px;height:155.20px;background:#fafafa;"></div>
<div style="left:25.20px;top:504.60px;width:989.60px;height:25.20px;background:#fff;"></div>
<div style="left:25.20px;top:529.80px;width:989.60px;height:24.00px;background:#fafafa;"></div>
<div style="left:25.20px;top:553.80px;width:989.60px;height:24.10px;background:#fff;"></div>
<div style="left:25.20px;top:577.90px;width:989.60px;height:24.10px;background:#fafafa;"></div>
<div style="left:25.20px;top:602.00px;width:989.60px;height:6.00px;background:#fff;"></div>
<div style="left:360.00px;top:453.60px;width:77.10px;height:26.10px;background:#e8f5e9;overflow:hidden;"><div style="left:0;top:0;width:77.1px;height:26.10px;line-height:30.10px;text-align:center;font-size:12.5px;font-weight:500;color:#4c9a50;letter-spacing:0.3px;">余剰</div></div>
<div style="left:437.10px;top:453.60px;width:77.10px;height:26.10px;background:#e8f5e9;overflow:hidden;"><div style="left:0;top:0;width:77.1px;height:26.10px;line-height:30.10px;text-align:center;font-size:12.5px;font-weight:500;color:#4c9a50;letter-spacing:0.3px;">余剰</div></div>
<div style="left:514.20px;top:453.60px;width:77.10px;height:26.10px;background:#e8f5e9;overflow:hidden;"><div style="left:0;top:0;width:77.1px;height:26.10px;line-height:30.10px;text-align:center;font-size:12.5px;font-weight:500;color:#4c9a50;letter-spacing:0.3px;">余剰</div></div>
<div style="left:591.30px;top:453.60px;width:77.10px;height:26.10px;background:#f7f7f7;"></div>
<div style="left:668.40px;top:453.60px;width:77.10px;height:26.10px;background:#e8f5e9;overflow:hidden;"><div style="left:0;top:0;width:77.1px;height:26.10px;line-height:30.10px;text-align:center;font-size:12.5px;font-weight:500;color:#4c9a50;letter-spacing:0.3px;">余剰</div></div>
<div style="left:745.50px;top:453.60px;width:77.10px;height:26.10px;background:#e8f5e9;overflow:hidden;"><div style="left:0;top:0;width:77.1px;height:26.10px;line-height:30.10px;text-align:center;font-size:12.5px;font-weight:500;color:#4c9a50;letter-spacing:0.3px;">余剰</div></div>
<div style="left:822.60px;top:453.60px;width:77.10px;height:26.10px;background:#e8f5e9;overflow:hidden;"><div style="left:0;top:0;width:77.1px;height:26.10px;line-height:30.10px;text-align:center;font-size:12.5px;font-weight:500;color:#4c9a50;letter-spacing:0.3px;">余剰</div></div>
<div style="left:899.70px;top:453.60px;width:77.10px;height:26.10px;background:#e8f5e9;overflow:hidden;"><div style="left:0;top:0;width:77.1px;height:26.10px;line-height:30.10px;text-align:center;font-size:12.5px;font-weight:500;color:#4c9a50;letter-spacing:0.3px;">余剰</div></div>
<div style="left:976.80px;top:453.60px;width:55.20px;height:26.10px;background:#e8f5e9;overflow:hidden;"><div style="left:0;top:0;width:77.1px;height:26.10px;line-height:30.10px;text-align:center;font-size:12.5px;font-weight:500;color:#4c9a50;letter-spacing:0.3px;">余剰</div></div>
<div style="left:42.00px;top:454.60px;width:260.00px;height:26.10px;line-height:26.10px;font-size:13px;color:#666;white-space:nowrap;letter-spacing:0.1px;">日別配置状況(登降園予定に基づく)</div>
<div style="left:42.00px;top:479.50px;width:200.00px;height:24.90px;line-height:24.90px;font-size:13px;color:#666;white-space:nowrap;">シフト別必要配置人数</div>
<svg style="left:177.90px;top:482.00px;" width="21.00" height="21.00" viewBox="0 0 24 24"><path fill="#0c9cf0" d="M11 18h2v-2h-2v2zm1-16C6.48 2 2 6.48 2 12s4.48 10 10 10 10-4.48 10-10S17.52 2 12 2zm0 18c-4.41 0-8-3.59-8-8s3.59-8 8-8 8 3.59 8 8-3.59 8-8 8zm0-14c-2.21 0-4 1.79-4 4h2c0-1.1.9-2 2-2s2 .9 2 2c0 2-3 1.75-3 5h2c0-2.25 3-2.5 3-5 0-2.21-1.79-4-4-4z"/></svg>
<svg style="left:692.50px;top:480.60px;" width="20.00" height="20.00" viewBox="0 0 24 24"><path fill="#888" d="M16.59 8.59L12 13.17 7.41 8.59 6 10l6 6 6-6z"/></svg>
<div style="left:25.2px;top:504.6px;width:989.5999999999999px;height:103.39999999999998px;overflow:hidden;">
<div style="left:0;top:0.00px;width:10.5px;height:25.20px;background:#ffebee;"></div>
<div style="left:16.60px;top:-1.00px;width:40px;height:25.20px;line-height:25.20px;font-size:14px;color:#222;">A</div>
<div style="left:334.80px;top:-0.90px;width:77.1px;height:25.20px;line-height:25.20px;text-align:center;font-size:15.5px;color:#222;white-space:nowrap;">1<span style="font-size:19px;margin:0 3.3px 0 3.1px;position:relative;top:1.6px;">/</span>1</div>
<div style="left:411.90px;top:-0.90px;width:77.1px;height:25.20px;line-height:25.20px;text-align:center;font-size:15.5px;color:#ea4f5b;white-space:nowrap;">0<span style="font-size:19px;margin:0 3.3px 0 3.1px;position:relative;top:1.6px;">/</span>1</div>
<div style="left:489.00px;top:-0.90px;width:77.1px;height:25.20px;line-height:25.20px;text-align:center;font-size:15.5px;color:#222;white-space:nowrap;">0<span style="font-size:19px;margin:0 3.3px 0 3.1px;position:relative;top:1.6px;">/</span>0</div>
<div style="left:566.10px;top:-0.90px;width:77.1px;height:25.20px;line-height:25.20px;text-align:center;font-size:15.5px;color:#222;white-space:nowrap;">0<span style="font-size:19px;margin:0 3.3px 0 3.1px;position:relative;top:1.6px;">/</span>0</div>
<div style="left:643.20px;top:-0.90px;width:77.1px;height:25.20px;line-height:25.20px;text-align:center;font-size:15.5px;color:#222;white-space:nowrap;">1<span style="font-size:19px;margin:0 3.3px 0 3.1px;position:relative;top:1.6px;">/</span>1</div>
<div style="left:720.30px;top:-0.90px;width:77.1px;height:25.20px;line-height:25.20px;text-align:center;font-size:15.5px;color:#3c9445;white-space:nowrap;">2<span style="font-size:19px;margin:0 3.3px 0 3.1px;position:relative;top:1.6px;">/</span>1</div>
<div style="left:797.40px;top:-0.90px;width:77.1px;height:25.20px;line-height:25.20px;text-align:center;font-size:15.5px;color:#222;white-space:nowrap;">1<span style="font-size:19px;margin:0 3.3px 0 3.1px;position:relative;top:1.6px;">/</span>1</div>
<div style="left:874.50px;top:-0.90px;width:77.1px;height:25.20px;line-height:25.20px;text-align:center;font-size:15.5px;color:#222;white-space:nowrap;">1<span style="font-size:19px;margin:0 3.3px 0 3.1px;position:relative;top:1.6px;">/</span>1</div>
<div style="left:951.60px;top:-0.90px;width:77.1px;height:25.20px;line-height:25.20px;text-align:center;font-size:15.5px;color:#222;white-space:nowrap;">1<span style="font-size:19px;margin:0 3.3px 0 3.1px;position:relative;top:1.6px;">/</span>1</div>
<div style="left:0;top:25.20px;width:10.5px;height:24.00px;background:#ffecb3;"></div>
<div style="left:16.60px;top:24.20px;width:40px;height:24.00px;line-height:24.00px;font-size:14px;color:#222;">B</div>
<div style="left:334.80px;top:24.30px;width:77.1px;height:24.00px;line-height:24.00px;text-align:center;font-size:15.5px;color:#3c9445;white-space:nowrap;">1<span style="font-size:19px;margin:0 3.3px 0 3.1px;position:relative;top:1.6px;">/</span>0</div>
<div style="left:411.90px;top:24.30px;width:77.1px;height:24.00px;line-height:24.00px;text-align:center;font-size:15.5px;color:#3c9445;white-space:nowrap;">2<span style="font-size:19px;margin:0 3.3px 0 3.1px;position:relative;top:1.6px;">/</span>0</div>
<div style="left:489.00px;top:24.30px;width:77.1px;height:24.00px;line-height:24.00px;text-align:center;font-size:15.5px;color:#222;white-space:nowrap;">0<span style="font-size:19px;margin:0 3.3px 0 3.1px;position:relative;top:1.6px;">/</span>0</div>
<div style="left:566.10px;top:24.30px;width:77.1px;height:24.00px;line-height:24.00px;text-align:center;font-size:15.5px;color:#222;white-space:nowrap;">0<span style="font-size:19px;margin:0 3.3px 0 3.1px;position:relative;top:1.6px;">/</span>0</div>
<div style="left:643.20px;top:24.30px;width:77.1px;height:24.00px;line-height:24.00px;text-align:center;font-size:15.5px;color:#222;white-space:nowrap;">0<span style="font-size:19px;margin:0 3.3px 0 3.1px;position:relative;top:1.6px;">/</span>0</div>
<div style="left:720.30px;top:24.30px;width:77.1px;height:24.00px;line-height:24.00px;text-align:center;font-size:15.5px;color:#222;white-space:nowrap;">0<span style="font-size:19px;margin:0 3.3px 0 3.1px;position:relative;top:1.6px;">/</span>0</div>
<div style="left:797.40px;top:24.30px;width:77.1px;height:24.00px;line-height:24.00px;text-align:center;font-size:15.5px;color:#3c9445;white-space:nowrap;">2<span style="font-size:19px;margin:0 3.3px 0 3.1px;position:relative;top:1.6px;">/</span>0</div>
<div style="left:874.50px;top:24.30px;width:77.1px;height:24.00px;line-height:24.00px;text-align:center;font-size:15.5px;color:#3c9445;white-space:nowrap;">2<span style="font-size:19px;margin:0 3.3px 0 3.1px;position:relative;top:1.6px;">/</span>0</div>
<div style="left:951.60px;top:24.30px;width:77.1px;height:24.00px;line-height:24.00px;text-align:center;font-size:15.5px;color:#3c9445;white-space:nowrap;">2<span style="font-size:19px;margin:0 3.3px 0 3.1px;position:relative;top:1.6px;">/</span>0</div>
<div style="left:0;top:49.20px;width:10.5px;height:24.10px;background:#ffcdd2;"></div>
<div style="left:16.60px;top:48.20px;width:40px;height:24.10px;line-height:24.10px;font-size:14px;color:#222;">C</div>
<div style="left:334.80px;top:48.30px;width:77.1px;height:24.10px;line-height:24.10px;text-align:center;font-size:15.5px;color:#ea4f5b;white-space:nowrap;">1<span style="font-size:19px;margin:0 3.3px 0 3.1px;position:relative;top:1.6px;">/</span>3</div>
<div style="left:411.90px;top:48.30px;width:77.1px;height:24.10px;line-height:24.10px;text-align:center;font-size:15.5px;color:#ea4f5b;white-space:nowrap;">1<span style="font-size:19px;margin:0 3.3px 0 3.1px;position:relative;top:1.6px;">/</span>3</div>
<div style="left:489.00px;top:48.30px;width:77.1px;height:24.10px;line-height:24.10px;text-align:center;font-size:15.5px;color:#222;white-space:nowrap;">0<span style="font-size:19px;margin:0 3.3px 0 3.1px;position:relative;top:1.6px;">/</span>0</div>
<div style="left:566.10px;top:48.30px;width:77.1px;height:24.10px;line-height:24.10px;text-align:center;font-size:15.5px;color:#222;white-space:nowrap;">0<span style="font-size:19px;margin:0 3.3px 0 3.1px;position:relative;top:1.6px;">/</span>0</div>
<div style="left:643.20px;top:48.30px;width:77.1px;height:24.10px;line-height:24.10px;text-align:center;font-size:15.5px;color:#ea4f5b;white-space:nowrap;">1<span style="font-size:19px;margin:0 3.3px 0 3.1px;position:relative;top:1.6px;">/</span>3</div>
<div style="left:720.30px;top:48.30px;width:77.1px;height:24.10px;line-height:24.10px;text-align:center;font-size:15.5px;color:#ea4f5b;white-space:nowrap;">0<span style="font-size:19px;margin:0 3.3px 0 3.1px;position:relative;top:1.6px;">/</span>3</div>
<div style="left:797.40px;top:48.30px;width:77.1px;height:24.10px;line-height:24.10px;text-align:center;font-size:15.5px;color:#ea4f5b;white-space:nowrap;">0<span style="font-size:19px;margin:0 3.3px 0 3.1px;position:relative;top:1.6px;">/</span>3</div>
<div style="left:874.50px;top:48.30px;width:77.1px;height:24.10px;line-height:24.10px;text-align:center;font-size:15.5px;color:#ea4f5b;white-space:nowrap;">1<span style="font-size:19px;margin:0 3.3px 0 3.1px;position:relative;top:1.6px;">/</span>3</div>
<div style="left:951.60px;top:48.30px;width:77.1px;height:24.10px;line-height:24.10px;text-align:center;font-size:15.5px;color:#ea4f5b;white-space:nowrap;">1<span style="font-size:19px;margin:0 3.3px 0 3.1px;position:relative;top:1.6px;">/</span>3</div>
<div style="left:0;top:73.30px;width:10.5px;height:24.10px;background:#e1bee7;"></div>
<div style="left:16.60px;top:72.30px;width:40px;height:24.10px;line-height:24.10px;font-size:14px;color:#222;">D</div>
<div style="left:334.80px;top:72.40px;width:77.1px;height:24.10px;line-height:24.10px;text-align:center;font-size:15.5px;color:#222;white-space:nowrap;">1<span style="font-size:19px;margin:0 3.3px 0 3.1px;position:relative;top:1.6px;">/</span>1</div>
<div style="left:411.90px;top:72.40px;width:77.1px;height:24.10px;line-height:24.10px;text-align:center;font-size:15.5px;color:#222;white-space:nowrap;">1<span style="font-size:19px;margin:0 3.3px 0 3.1px;position:relative;top:1.6px;">/</span>1</div>
<div style="left:489.00px;top:72.40px;width:77.1px;height:24.10px;line-height:24.10px;text-align:center;font-size:15.5px;color:#222;white-space:nowrap;">0<span style="font-size:19px;margin:0 3.3px 0 3.1px;position:relative;top:1.6px;">/</span>0</div>
<div style="left:566.10px;top:72.40px;width:77.1px;height:24.10px;line-height:24.10px;text-align:center;font-size:15.5px;color:#222;white-space:nowrap;">0<span style="font-size:19px;margin:0 3.3px 0 3.1px;position:relative;top:1.6px;">/</span>0</div>
<div style="left:643.20px;top:72.40px;width:77.1px;height:24.10px;line-height:24.10px;text-align:center;font-size:15.5px;color:#222;white-space:nowrap;">1<span style="font-size:19px;margin:0 3.3px 0 3.1px;position:relative;top:1.6px;">/</span>1</div>
<div style="left:720.30px;top:72.40px;width:77.1px;height:24.10px;line-height:24.10px;text-align:center;font-size:15.5px;color:#222;white-space:nowrap;">1<span style="font-size:19px;margin:0 3.3px 0 3.1px;position:relative;top:1.6px;">/</span>1</div>
<div style="left:797.40px;top:72.40px;width:77.1px;height:24.10px;line-height:24.10px;text-align:center;font-size:15.5px;color:#ea4f5b;white-space:nowrap;">0<span style="font-size:19px;margin:0 3.3px 0 3.1px;position:relative;top:1.6px;">/</span>1</div>
<div style="left:874.50px;top:72.40px;width:77.1px;height:24.10px;line-height:24.10px;text-align:center;font-size:15.5px;color:#ea4f5b;white-space:nowrap;">0<span style="font-size:19px;margin:0 3.3px 0 3.1px;position:relative;top:1.6px;">/</span>1</div>
<div style="left:951.60px;top:72.40px;width:77.1px;height:24.10px;line-height:24.10px;text-align:center;font-size:15.5px;color:#222;white-space:nowrap;">1<span style="font-size:19px;margin:0 3.3px 0 3.1px;position:relative;top:1.6px;">/</span>1</div>
<div style="left:0;top:97.40px;width:10.5px;height:16.00px;background:#bdd8fb;"></div>
</div>
<div style="left:25.20px;top:453.10px;width:1024.60px;height:1.00px;background:#e0e0e0;"></div>
<div style="left:25.20px;top:479.20px;width:1024.60px;height:1.00px;background:#e0e0e0;"></div>
<div style="left:25.20px;top:504.10px;width:1024.60px;height:1.00px;background:#e0e0e0;"></div>
<div style="left:25.20px;top:529.30px;width:989.60px;height:1.00px;background:#e0e0e0;"></div>
<div style="left:25.20px;top:553.30px;width:989.60px;height:1.00px;background:#e0e0e0;"></div>
<div style="left:25.20px;top:577.40px;width:989.60px;height:1.00px;background:#e0e0e0;"></div>
<div style="left:25.20px;top:601.50px;width:989.60px;height:1.00px;background:#e0e0e0;"></div>
<div style="left:436.60px;top:453.60px;width:1.00px;height:26.10px;background:#e0e0e0;"></div>
<div style="left:436.60px;top:504.60px;width:1.00px;height:103.40px;background:#e0e0e0;"></div>
<div style="left:513.70px;top:453.60px;width:1.00px;height:26.10px;background:#e0e0e0;"></div>
<div style="left:513.70px;top:504.60px;width:1.00px;height:103.40px;background:#e0e0e0;"></div>
<div style="left:590.80px;top:453.60px;width:1.00px;height:26.10px;background:#e0e0e0;"></div>
<div style="left:590.80px;top:504.60px;width:1.00px;height:103.40px;background:#e0e0e0;"></div>
<div style="left:667.90px;top:453.60px;width:1.00px;height:26.10px;background:#e0e0e0;"></div>
<div style="left:667.90px;top:504.60px;width:1.00px;height:103.40px;background:#e0e0e0;"></div>
<div style="left:745.00px;top:453.60px;width:1.00px;height:26.10px;background:#e0e0e0;"></div>
<div style="left:745.00px;top:504.60px;width:1.00px;height:103.40px;background:#e0e0e0;"></div>
<div style="left:822.10px;top:453.60px;width:1.00px;height:26.10px;background:#e0e0e0;"></div>
<div style="left:822.10px;top:504.60px;width:1.00px;height:103.40px;background:#e0e0e0;"></div>
<div style="left:899.20px;top:453.60px;width:1.00px;height:26.10px;background:#e0e0e0;"></div>
<div style="left:899.20px;top:504.60px;width:1.00px;height:103.40px;background:#e0e0e0;"></div>
<div style="left:976.30px;top:453.60px;width:1.00px;height:26.10px;background:#e0e0e0;"></div>
<div style="left:976.30px;top:504.60px;width:1.00px;height:103.40px;background:#e0e0e0;"></div>
<div style="left:355.50px;top:452.80px;width:1.00px;height:155.20px;background:#d8d8d8;"></div>
<div style="left:357.50px;top:452.80px;width:1.00px;height:155.20px;background:#e0e0e0;"></div>
<div style="left:1032.00px;top:453.60px;width:17.80px;height:25.60px;background:#f1f1f1;"></div>
<svg style="left:1036.50px;top:460.00px;" width="8.00" height="5.00" viewBox="0 0 8 5"><path fill="#a3a3a3" d="M0 5h8L4 0z"/></svg>
<svg style="left:1036.50px;top:470.50px;" width="8.00" height="5.00" viewBox="0 0 8 5"><path fill="#a3a3a3" d="M0 0h8L4 5z"/></svg>
<div style="left:1014.80px;top:504.60px;width:17.20px;height:103.40px;background:#f1f1f1;"></div>
<div style="left:1016.60px;top:522.90px;width:12.80px;height:41.30px;background:#c1c1c1;"></div>
<svg style="left:1019.50px;top:512.00px;" width="7.00" height="5.00" viewBox="0 0 7 5"><path fill="#a3a3a3" d="M0 5h7L3.5 0z"/></svg>
<svg style="left:1019.50px;top:597.00px;" width="7.00" height="5.00" viewBox="0 0 7 5"><path fill="#505050" d="M0 0h7L3.5 5z"/></svg>
<svg style="left:1037.00px;top:597.00px;" width="7.00" height="5.00" viewBox="0 0 7 5"><path fill="#a3a3a3" d="M0 0h7L3.5 5z"/></svg>
<div style="left:25.20px;top:119.00px;width:1024.60px;height:489.40px;box-sizing:border-box;border:1px solid #d6d6d6;border-radius:3px;"></div>
<div style="left:4.00px;top:666.00px;width:1059.00px;height:134.00px;background:#fff;"></div>
<div style="left:10.30px;top:623.40px;width:168.40px;height:42.60px;box-sizing:border-box;border-radius:5px 5px 0 0;background:#f5f5f5;border:1px solid #cfcfcf;border-bottom:none;"></div>
<div style="left:10.30px;top:635.00px;width:168.40px;height:22.00px;line-height:22.00px;text-align:center;font-size:15px;font-weight:700;color:#333;letter-spacing:0.25px;white-space:nowrap;">グループを選択</div>
<div style="left:185.20px;top:623.40px;width:168.40px;height:43.80px;box-sizing:border-box;border-radius:5px 5px 0 0;background:#fff;border:1.3px solid #35a6ee;border-bottom:none;"></div>
<div style="left:185.20px;top:635.00px;width:168.40px;height:22.00px;line-height:22.00px;text-align:center;font-size:15px;font-weight:700;color:#333;letter-spacing:0.25px;white-space:nowrap;">シフトを追加</div>
<div style="left:361.00px;top:623.40px;width:168.40px;height:42.60px;box-sizing:border-box;border-radius:5px 5px 0 0;background:#f5f5f5;border:1px solid #cfcfcf;border-bottom:none;"></div>
<div style="left:361.00px;top:635.00px;width:168.40px;height:22.00px;line-height:22.00px;text-align:center;font-size:15px;font-weight:700;color:#333;letter-spacing:0.25px;white-space:nowrap;">コピー&amp;ペースト</div>
<div style="left:536.20px;top:623.40px;width:168.40px;height:42.60px;box-sizing:border-box;border-radius:5px 5px 0 0;background:#f5f5f5;border:1px solid #cfcfcf;border-bottom:none;"></div>
<div style="left:536.20px;top:635.00px;width:168.40px;height:22.00px;line-height:22.00px;text-align:center;font-size:15px;font-weight:700;color:#333;letter-spacing:0.25px;white-space:nowrap;">マーキングを追加</div>
<div style="left:4.00px;top:665.60px;width:1059.00px;height:1.20px;background:#35a6ee;"></div>
<div style="left:1019.20px;top:623.40px;width:43.80px;height:43.20px;background:#0c9cf0;border-radius:4px 4px 0 0;"></div>
<svg style="left:1028.30px;top:632.20px;" width="26.00" height="26.00" viewBox="0 0 24 24"><path fill="#fff" d="M16.59 8.59L12 13.17 7.41 8.59 6 10l6 6 6-6z"/></svg>
<div style="left:15.80px;top:678.80px;width:200.00px;height:50.20px;box-sizing:border-box;background:#fff;border:1px solid #d9d9d9;border-radius:4px;box-shadow:0 1px 1.5px rgba(0,0,0,.22);overflow:hidden;"><div style="left:0;top:0;width:12.5px;height:50px;background:#ffebee;"></div></div>
<div style="left:37.40px;top:686.40px;width:100.00px;height:20.00px;line-height:20.00px;font-size:15px;color:#222;white-space:nowrap;">A</div>
<div style="left:37.40px;top:705.70px;width:150.00px;height:18.00px;line-height:18.00px;font-size:13px;color:#333;white-space:nowrap;letter-spacing:0.35px;">07:00 ~ 16:00</div>
<svg style="left:187.50px;top:685.90px;" width="17.40" height="17.40" viewBox="0 0 24 24"><path fill="#0c9cf0" d="M11 7h2v2h-2zm0 4h2v6h-2zm1-9C6.48 2 2 6.48 2 12s4.48 10 10 10 10-4.48 10-10S17.52 2 12 2zm0 18c-4.41 0-8-3.59-8-8s3.59-8 8-8 8 3.59 8 8-3.59 8-8 8z"/></svg>
<div style="left:226.30px;top:678.80px;width:200.00px;height:50.20px;box-sizing:border-box;background:#fff;border:1px solid #d9d9d9;border-radius:4px;box-shadow:0 1px 1.5px rgba(0,0,0,.22);overflow:hidden;"><div style="left:0;top:0;width:12.5px;height:50px;background:#ffcdd2;"></div></div>
<div style="left:247.90px;top:686.40px;width:100.00px;height:20.00px;line-height:20.00px;font-size:15px;color:#222;white-space:nowrap;">C</div>
<div style="left:247.90px;top:705.70px;width:150.00px;height:18.00px;line-height:18.00px;font-size:13px;color:#333;white-space:nowrap;letter-spacing:0.35px;">08:00 ~ 17:00</div>
<svg style="left:398.00px;top:685.90px;" width="17.40" height="17.40" viewBox="0 0 24 24"><path fill="#0c9cf0" d="M11 7h2v2h-2zm0 4h2v6h-2zm1-9C6.48 2 2 6.48 2 12s4.48 10 10 10 10-4.48 10-10S17.52 2 12 2zm0 18c-4.41 0-8-3.59-8-8s3.59-8 8-8 8 3.59 8 8-3.59 8-8 8z"/></svg>
<div style="left:436.80px;top:678.80px;width:200.00px;height:50.20px;box-sizing:border-box;background:#fff;border:1px solid #d9d9d9;border-radius:4px;box-shadow:0 1px 1.5px rgba(0,0,0,.22);overflow:hidden;"><div style="left:0;top:0;width:12.5px;height:50px;background:#bdd8fb;"></div></div>
<div style="left:458.40px;top:686.40px;width:100.00px;height:20.00px;line-height:20.00px;font-size:15px;color:#222;white-space:nowrap;">E</div>
<div style="left:458.40px;top:705.70px;width:150.00px;height:18.00px;line-height:18.00px;font-size:13px;color:#333;white-space:nowrap;letter-spacing:0.35px;">09:00 ~ 18:00</div>
<svg style="left:608.50px;top:685.90px;" width="17.40" height="17.40" viewBox="0 0 24 24"><path fill="#0c9cf0" d="M11 7h2v2h-2zm0 4h2v6h-2zm1-9C6.48 2 2 6.48 2 12s4.48 10 10 10 10-4.48 10-10S17.52 2 12 2zm0 18c-4.41 0-8-3.59-8-8s3.59-8 8-8 8 3.59 8 8-3.59 8-8 8z"/></svg>
<div style="left:647.30px;top:678.80px;width:200.00px;height:50.20px;box-sizing:border-box;background:#fff;border:1px solid #d9d9d9;border-radius:4px;box-shadow:0 1px 1.5px rgba(0,0,0,.22);overflow:hidden;"><div style="left:0;top:0;width:12.5px;height:50px;background:#efebe9;"></div></div>
<div style="left:668.90px;top:687.60px;width:100.00px;height:20.00px;line-height:20.00px;font-size:15px;color:#222;white-space:nowrap;">土曜</div>
<div style="left:668.90px;top:705.70px;width:150.00px;height:18.00px;line-height:18.00px;font-size:13px;color:#333;white-space:nowrap;letter-spacing:0.35px;">08:00 ~ 16:00</div>
<svg style="left:819.00px;top:685.90px;" width="17.40" height="17.40" viewBox="0 0 24 24"><path fill="#0c9cf0" d="M11 7h2v2h-2zm0 4h2v6h-2zm1-9C6.48 2 2 6.48 2 12s4.48 10 10 10 10-4.48 10-10S17.52 2 12 2zm0 18c-4.41 0-8-3.59-8-8s3.59-8 8-8 8 3.59 8 8-3.59 8-8 8z"/></svg>
<div style="left:15.80px;top:739.40px;width:200.00px;height:50.20px;box-sizing:border-box;background:#fff;border:1px solid #d9d9d9;border-radius:4px;box-shadow:0 1px 1.5px rgba(0,0,0,.22);overflow:hidden;"><div style="left:0;top:0;width:12.5px;height:50px;background:#ffecb3;"></div></div>
<div style="left:37.40px;top:747.00px;width:100.00px;height:20.00px;line-height:20.00px;font-size:15px;color:#222;white-space:nowrap;">B</div>
<div style="left:37.40px;top:766.30px;width:150.00px;height:18.00px;line-height:18.00px;font-size:13px;color:#333;white-space:nowrap;letter-spacing:0.35px;">07:30 ~ 16:30</div>
<svg style="left:187.50px;top:746.50px;" width="17.40" height="17.40" viewBox="0 0 24 24"><path fill="#0c9cf0" d="M11 7h2v2h-2zm0 4h2v6h-2zm1-9C6.48 2 2 6.48 2 12s4.48 10 10 10 10-4.48 10-10S17.52 2 12 2zm0 18c-4.41 0-8-3.59-8-8s3.59-8 8-8 8 3.59 8 8-3.59 8-8 8z"/></svg>
<div style="left:226.30px;top:739.40px;width:200.00px;height:50.20px;box-sizing:border-box;background:#fff;border:1px solid #d9d9d9;border-radius:4px;box-shadow:0 1px 1.5px rgba(0,0,0,.22);overflow:hidden;"><div style="left:0;top:0;width:12.5px;height:50px;background:#e1bee7;"></div></div>
<div style="left:247.90px;top:747.00px;width:100.00px;height:20.00px;line-height:20.00px;font-size:15px;color:#222;white-space:nowrap;">D</div>
<div style="left:247.90px;top:766.30px;width:150.00px;height:18.00px;line-height:18.00px;font-size:13px;color:#333;white-space:nowrap;letter-spacing:0.35px;">08:30 ~ 17:30</div>
<svg style="left:398.00px;top:746.50px;" width="17.40" height="17.40" viewBox="0 0 24 24"><path fill="#0c9cf0" d="M11 7h2v2h-2zm0 4h2v6h-2zm1-9C6.48 2 2 6.48 2 12s4.48 10 10 10 10-4.48 10-10S17.52 2 12 2zm0 18c-4.41 0-8-3.59-8-8s3.59-8 8-8 8 3.59 8 8-3.59 8-8 8z"/></svg>
<div style="left:436.80px;top:739.40px;width:200.00px;height:50.20px;box-sizing:border-box;background:#fff;border:1px solid #d9d9d9;border-radius:4px;box-shadow:0 1px 1.5px rgba(0,0,0,.22);overflow:hidden;"><div style="left:0;top:0;width:12.5px;height:50px;background:#c8e6c9;"></div></div>
<div style="left:458.40px;top:747.00px;width:100.00px;height:20.00px;line-height:20.00px;font-size:15px;color:#222;white-space:nowrap;">F</div>
<div style="left:458.40px;top:766.30px;width:150.00px;height:18.00px;line-height:18.00px;font-size:13px;color:#333;white-space:nowrap;letter-spacing:0.35px;">10:00 ~ 19:00</div>
<svg style="left:608.50px;top:746.50px;" width="17.40" height="17.40" viewBox="0 0 24 24"><path fill="#0c9cf0" d="M11 7h2v2h-2zm0 4h2v6h-2zm1-9C6.48 2 2 6.48 2 12s4.48 10 10 10 10-4.48 10-10S17.52 2 12 2zm0 18c-4.41 0-8-3.59-8-8s3.59-8 8-8 8 3.59 8 8-3.59 8-8 8z"/></svg>
<svg style="left:666.60px;top:745.00px;" width="63.00" height="42.00" viewBox="0 0 63 42"><path fill="#fff" stroke="#dedede" stroke-width="1" d="M20 0.8H59a3 3 0 0 1 3 3v34.4a3 3 0 0 1-3 3H20L0.9 21z"/></svg>
<div style="left:696.00px;top:758.80px;width:34.00px;height:20.00px;line-height:20.00px;font-size:12px;color:#a8a8a8;white-space:nowrap;">前へ</div>
<div style="left:735.00px;top:756.00px;width:40.00px;height:24.00px;line-height:24.00px;text-align:center;font-size:17px;color:#222;">1/2</div>
<svg style="left:781.00px;top:745.00px;" width="63.00" height="42.00" viewBox="0 0 63 42"><path fill="#e9f4fd" stroke="#35a6ee" stroke-width="1.2" d="M41.5 0.8H4a3 3 0 0 0-3 3v34.4a3 3 0 0 0 3 3H41.5L62.1 21z"/></svg>
<div style="left:790.50px;top:758.80px;width:34.00px;height:20.00px;line-height:20.00px;font-size:13px;font-weight:500;color:#333;white-space:nowrap;">次へ</div>
<div style="left:863.40px;top:666.80px;width:199.60px;height:134.00px;background:#f5f5f5;"></div>
<div style="left:878.60px;top:680.00px;width:179.20px;height:48.60px;line-height:48.60px;box-sizing:border-box;border-radius:25px;text-align:center;font-size:14.6px;font-weight:700;white-space:nowrap;background:#fff;border:1px solid #dadada;box-shadow:0 1.5px 2px rgba(0,0,0,.25);color:#0c9cf0;letter-spacing:-0.1px;">個別シフト登録・修正</div>
<div style="left:878.60px;top:740.50px;width:84.40px;height:49.00px;line-height:49.00px;box-sizing:border-box;border-radius:25px;text-align:center;font-size:14.6px;font-weight:700;white-space:nowrap;background:#fff;border:1px solid #dadada;box-shadow:0 1.5px 2px rgba(0,0,0,.25);color:#0c9cf0;">解除</div>
<div style="left:972.00px;top:740.50px;width:85.80px;height:49.00px;line-height:49.00px;box-sizing:border-box;border-radius:25px;text-align:center;font-size:14.6px;font-weight:700;white-space:nowrap;background:#e1eef8;border:1.3px solid #35a6ee;box-shadow:0 1.5px 2px rgba(0,0,0,.2);color:#0c9cf0;">シフト休</div>
<div style="left:0.00px;top:0.00px;width:4.00px;height:800.00px;background:#fff;"></div>
<div style="left:1063.00px;top:0.00px;width:4.00px;height:800.00px;background:#fff;"></div>
<svg style="left:0;top:0;" width="1067" height="800" viewBox="0 0 1067 800"><rect x="357.8" y="172.5" width="684.7" height="265" rx="12" ry="12" fill="none" stroke="#f0550a" stroke-width="7.2"/><line x1="796.25" y1="368.42" x2="1013.80" y2="729.50" stroke="#f0550a" stroke-width="7.6"/><polygon points="786.60,352.40 788.29,375.55 806.28,364.71" fill="#f0550a"/><rect x="966.5" y="732.4" width="98" height="70" rx="3.5" ry="3.5" fill="none" stroke="#f0550a" stroke-width="7.2"/></svg>
</body></html>
